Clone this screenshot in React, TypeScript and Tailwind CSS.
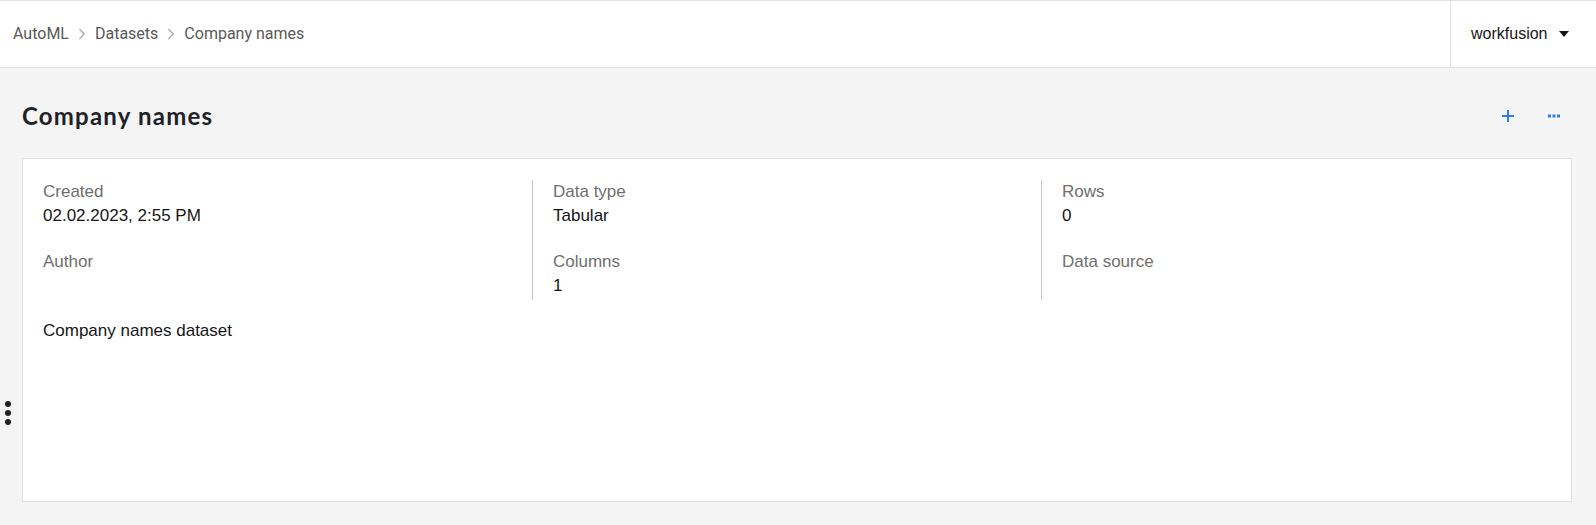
import { ChevronRight } from 'lucide-react';

type Field = { label: string; value?: string };

const columns: Field[][] = [
  [{ label: 'Created', value: '02.02.2023, 2:55 PM' }, { label: 'Author' }],
  [{ label: 'Data type', value: 'Tabular' }, { label: 'Columns', value: '1' }],
  [{ label: 'Rows', value: '0' }, { label: 'Data source' }],
];

const crumbs = ['AutoML', 'Datasets', 'Company names'];

function FieldBlock({ field }: { field: Field }) {
  return (
    <div className="h-[48px] leading-[24px] text-[17px]">
      <div className="text-[#6f6f6f]">{field.label}</div>
      {field.value && <div className="text-[#161616]">{field.value}</div>}
    </div>
  );
}

export default function App() {
  return (
    <div className="relative min-h-screen bg-[#f4f4f4] font-['Liberation_Sans',Arial,sans-serif]">
      <header className="flex h-[68px] items-stretch justify-between border-y border-[#e2e2e2] bg-white">
        <nav className="flex items-center pl-[13px] font-['Roboto',sans-serif] text-[16px] text-[#595959]">
          {crumbs.map((c, i) => (
            <div key={c} className="flex items-center">
              {i > 0 && <ChevronRight className="mx-[4px] h-[18px] w-[18px] text-[#a8a8a8]" strokeWidth={1.6} />}
              <span>{c}</span>
            </div>
          ))}
        </nav>
        <div className="flex w-[146px] items-center border-l border-[#e2e2e2] pl-[20px] text-[16px] text-[#161616]">
          <span>workfusion</span>
          <svg className="ml-[12px]" width="10" height="6" viewBox="0 0 10 6">
            <path d="M0 0h10L5 6z" fill="#161616" />
          </svg>
        </div>
      </header>

      <div className="flex items-center justify-between pl-[22px] pr-[35px] pt-[34px] pb-[28px]">
        <h1 className="font-['Lato',sans-serif] text-[24px] leading-[28px] font-bold tracking-[0.05em] text-[#1e2228]">
          Company names
        </h1>
        <div className="flex items-center gap-[32px] text-[#2f7cf0]">
          <svg width="14" height="14" viewBox="0 0 14 14">
            <path d="M7 1v12M1 7h12" stroke="currentColor" strokeWidth="2" />
          </svg>
          <svg width="14" height="4" viewBox="0 0 14 4">
            <rect x="1" y="0.5" width="3" height="3" fill="currentColor" />
            <rect x="5.5" y="0.5" width="3" height="3" fill="currentColor" />
            <rect x="10" y="0.5" width="3" height="3" fill="currentColor" />
          </svg>
        </div>
      </div>

      <section className="ml-[22px] mr-[24px] h-[344px] border border-[#e2e2e2] bg-white pt-[21px]">
        <div className="grid w-[1527px] grid-cols-3">
          {columns.map((col, i) => (
            <div key={i} className={`flex flex-col gap-[22px] pl-[20px] pb-[2px] ${i > 0 ? 'border-l border-[#c6c6c6]' : ''}`}>
              {col.map((f) => (
                <FieldBlock key={f.label} field={f} />
              ))}
            </div>
          ))}
        </div>
        <p className="mt-[19px] pl-[20px] text-[17px] leading-[24px] text-[#161616]">Company names dataset</p>
      </section>

      {/* drag handle on the left edge */}
      <div className="absolute left-[5px] top-[401px] flex flex-col gap-[3px]">
        <span className="h-[6px] w-[6px] rounded-full bg-[#222]" />
        <span className="h-[6px] w-[6px] rounded-full bg-[#222]" />
        <span className="h-[6px] w-[6px] rounded-full bg-[#222]" />
      </div>
    </div>
  );
}
